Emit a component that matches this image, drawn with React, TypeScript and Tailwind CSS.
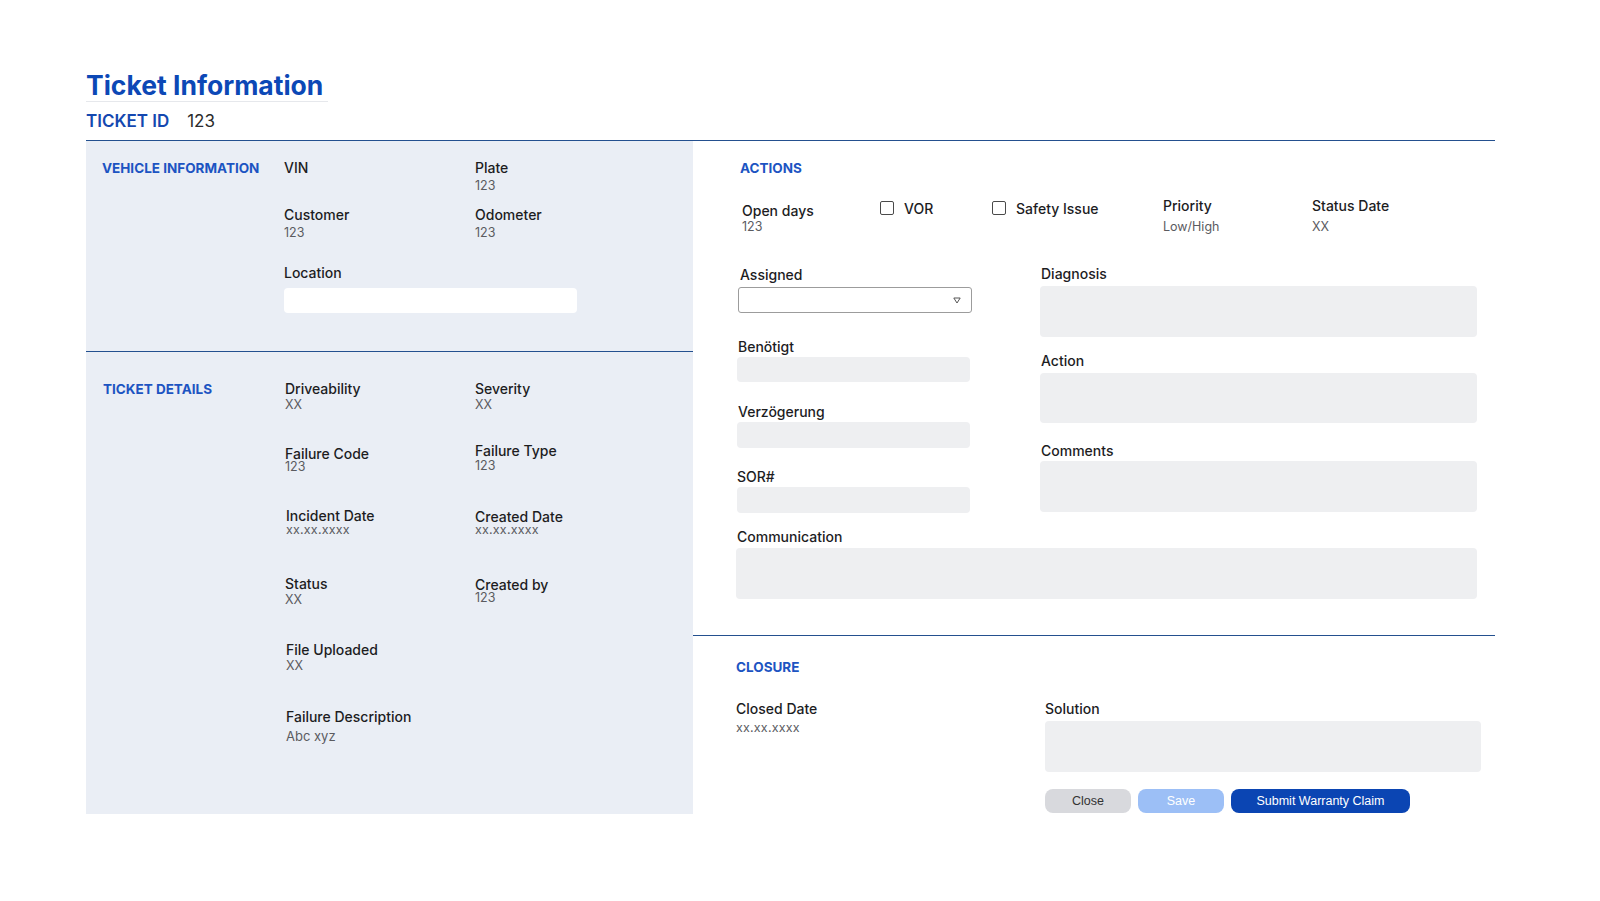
import React from 'react';

const font = { fontFamily: 'Inter, "Noto Sans", sans-serif' };

function Label({ children, className = '' }: { children: React.ReactNode; className?: string }) {
  return <div className={`text-[14px] font-medium leading-[18px] text-[#1d1d1f] ${className}`}>{children}</div>;
}

function Value({ children, className = '' }: { children: React.ReactNode; className?: string }) {
  return <div className={`text-[12.5px] leading-[14px] text-[#5b5b5f] ${className}`}>{children}</div>;
}

function Field({
  label,
  value,
  gap = 'mt-0',
  small = false,
  className = '',
}: {
  label: string;
  value: string;
  gap?: string;
  small?: boolean;
  className?: string;
}) {
  return (
    <div className={className}>
      <Label>{label}</Label>
      <Value className={`${gap} ${small ? 'text-[11px] tracking-[0.2px]' : ''}`}>{value}</Value>
    </div>
  );
}

function Heading({ children, className = '' }: { children: React.ReactNode; className?: string }) {
  return <div className={`text-[13.5px] font-bold leading-[20px] text-[#1c54c2] ${className}`}>{children}</div>;
}

function Box({ className = '' }: { className?: string }) {
  return <div className={`rounded-[4px] bg-[#eeeff1] ${className}`} />;
}

function Check({ label, className = '' }: { label: string; className?: string }) {
  return (
    <div className={`flex h-[18px] items-center gap-[10px] ${className}`}>
      <span className="h-[14px] w-[14px] rounded-[2px] border border-[#4a4a4a] bg-white" />
      <span className="text-[14px] font-medium text-[#1d1d1f]">{label}</span>
    </div>
  );
}

export default function App() {
  return (
    <div className="min-h-screen w-full bg-white" style={font}>
      <div className="pl-[86px] pr-[105px] pt-[70px]">
        <div className="w-[242px] border-b border-[#e6e8ec] text-[26.5px] font-bold leading-[31px] text-[#0c48b6]">
          Ticket Information
        </div>
        <div className="mt-[8px] flex items-center text-[17px] leading-[22px]">
          <span className="font-semibold text-[#1448b0]">TICKET ID</span>
          <span className="ml-[18px] text-[#2b2b2b]">123</span>
        </div>

        <div className="mt-[8px] flex border-t border-[#24508f]">
          {/* left panel */}
          <div className="flex w-[607px] flex-col bg-[#eaeef5]">
            <div className="flex h-[211px] border-b border-[#24508f] pl-[16px] pt-[18px]">
              <Heading className="-mt-[1px] w-[182px]">VEHICLE INFORMATION</Heading>
              <div>
                <div className="flex">
                  <div className="w-[191px]">
                    <Label>VIN</Label>
                  </div>
                  <Field label="Plate" value="123" gap="mt-[2px]" />
                </div>
                <div className="mt-[13px] flex">
                  <Field className="w-[191px]" label="Customer" value="123" gap="mt-[2px]" />
                  <Field label="Odometer" value="123" gap="mt-[2px]" />
                </div>
                <Label className="mt-[24px]">Location</Label>
                <div className="mt-[6px] h-[25px] w-[293px] rounded-[4px] bg-white" />
              </div>
            </div>

            <div className="flex flex-1 pl-[17px] pt-[27px]">
              <Heading className="w-[182px]">TICKET DETAILS</Heading>
              <div className="mt-[1px] flex w-[190px] flex-col">
                <Field label="Driveability" value="XX" />
                <Field className="mt-[33px]" label="Failure Code" value="123" gap="-mt-[3px]" />
                <Field className="mt-[33px] ml-[1px]" label="Incident Date" value="xx.xx.xxxx" gap="-mt-[2px]" small />
                <Field className="mt-[38px]" label="Status" value="XX" />
                <Field className="mt-[34px] ml-[1px]" label="File Uploaded" value="XX" />
                <Field className="mt-[35px] ml-[1px]" label="Failure Description" value="Abc xyz" gap="mt-[3px] text-[13px]" />
              </div>
              <div className="mt-[1px] flex flex-col">
                <Field label="Severity" value="XX" />
                <Field className="mt-[30px]" label="Failure Type" value="123" gap="-mt-[1px]" />
                <Field className="mt-[35px]" label="Created Date" value="xx.xx.xxxx" gap="-mt-[3px]" small />
                <Field className="mt-[39px]" label="Created by" value="123" gap="-mt-[3px]" />
              </div>
            </div>
          </div>

          {/* right panel */}
          <div className="flex-1">
            <div className="h-[495px] border-b border-[#24508f] pl-[44px] pt-[17px]">
              <Heading className="ml-[3px]">ACTIONS</Heading>
              <div className="mt-[19px] flex items-start">
                <Field className="ml-[5px] mt-[5px] w-[138px]" label="Open days" value="123" />
                <Check className="mt-[2px] w-[112px]" label="VOR" />
                <Check className="mt-[2px] w-[171px]" label="Safety Issue" />
                <Field className="w-[149px]" label="Priority" value="Low/High" gap="mt-[5px]" />
                <Field label="Status Date" value="XX" gap="mt-[5px]" />
              </div>

              <div className="mt-[31px] flex">
                <div className="w-[235px] pt-[1px]">
                  <Label className="ml-[3px]">Assigned</Label>
                  <div className="ml-[1px] mt-[3px] flex h-[26px] w-[234px] items-center justify-end rounded-[3px] border border-[#9c9c9c] bg-white pr-[10px]">
                    <svg width="8" height="7" viewBox="0 0 8 7">
                      <path d="M0.8 1 L7.2 1 L4 6 Z" fill="none" stroke="#555" strokeWidth="1" strokeLinejoin="round" />
                    </svg>
                  </div>
                  <Label className="ml-[1px] mt-[25px]">Benötigt</Label>
                  <Box className="mt-[1px] h-[25px] w-[233px]" />
                  <Label className="ml-[1px] mt-[21px]">Verzögerung</Label>
                  <Box className="mt-[1px] h-[26px] w-[233px]" />
                  <Label className="mt-[20px]">SOR#</Label>
                  <Box className="mt-[1px] h-[26px] w-[233px]" />
                </div>
                <div className="ml-[68px] w-[437px]">
                  <Label className="ml-[1px]">Diagnosis</Label>
                  <Box className="mt-[3px] h-[51px] w-full" />
                  <Label className="ml-[1px] mt-[15px]">Action</Label>
                  <Box className="mt-[3px] h-[50px] w-full" />
                  <Label className="ml-[1px] mt-[19px]">Comments</Label>
                  <Box className="mt-[1px] h-[51px] w-full" />
                </div>
              </div>

              <Label className="mt-[15px]">Communication</Label>
              <Box className="-ml-[1px] mt-[2px] h-[51px] w-[741px]" />
            </div>

            <div className="pl-[43px] pt-[21px]">
              <Heading>CLOSURE</Heading>
              <div className="mt-[23px] flex">
                <Field className="w-[309px]" label="Closed Date" value="xx.xx.xxxx" gap="mt-[3px]" small />
                <div className="w-[436px]">
                  <Label>Solution</Label>
                  <Box className="mt-[3px] h-[51px] w-full" />
                  <div
                    className="mt-[17px] flex gap-[7px] text-[12.5px]"
                    style={{ fontFamily: '"Liberation Sans", Arial, sans-serif' }}
                  >
                    <button className="h-[24px] w-[86px] rounded-[8px] bg-[#d8d9dd] text-[#333]">Close</button>
                    <button className="h-[24px] w-[86px] rounded-[8px] bg-[#9cbff6] text-white">Save</button>
                    <button className="h-[24px] w-[179px] rounded-[8px] bg-[#0b45b3] text-white">
                      Submit Warranty Claim
                    </button>
                  </div>
                </div>
              </div>
              <div className="h-[1px]" />
            </div>
          </div>
        </div>
      </div>
    </div>
  );
}
